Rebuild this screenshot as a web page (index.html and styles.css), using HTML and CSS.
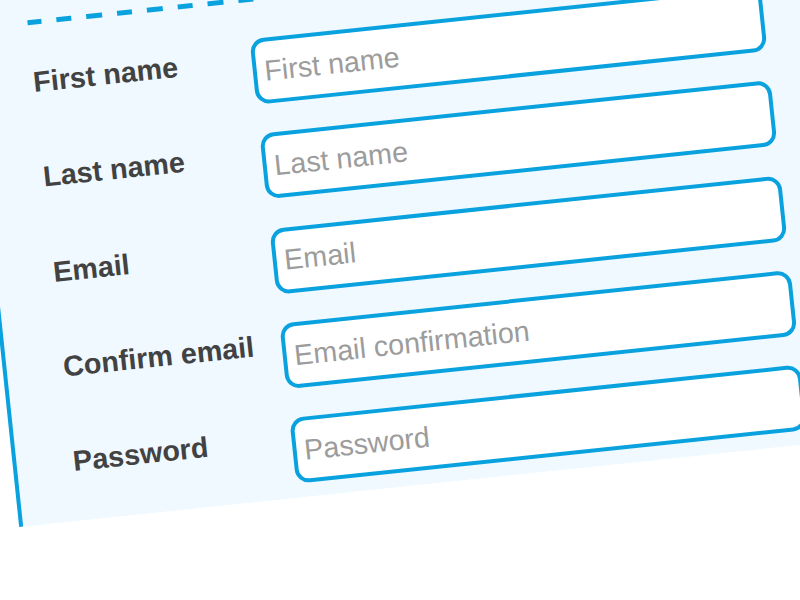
FILE: index.html
```html
<!DOCTYPE html>
<html lang="en">
<head>
<meta charset="utf-8">
<title>Sign up form</title>
<link rel="stylesheet" href="styles.css">
</head>
<body>
<div class="stage">
  <section class="panel">
    <div class="divider"></div>
    <form class="form">
      <label class="label" for="first">First name</label>
      <input class="field" id="first" type="text" placeholder="First name">
      <label class="label" for="last">Last name</label>
      <input class="field" id="last" type="text" placeholder="Last name">
      <label class="label" for="email">Email</label>
      <input class="field" id="email" type="email" placeholder="Email">
      <label class="label" for="confirm">Confirm email</label>
      <input class="field" id="confirm" type="email" placeholder="Email confirmation">
      <label class="label" for="password">Password</label>
      <input class="field" id="password" type="password" placeholder="Password">
    </form>
  </section>
</div>
</body>
</html>
```
FILE: styles.css
```css
html, body {
  margin: 0;
  padding: 0;
  overflow: hidden;
  background: #ffffff;
  width: 800px;
  height: 600px;
}

.stage {
  width: 800px;
  height: 600px;
  overflow: hidden;
}

.panel {
  box-sizing: border-box;
  width: 920px;
  margin: -20px 0 0 -36.5px;
  padding: 43px 0 13.6px 56.5px;
  background: #eff9ff;
  border-left: 4px solid #0aa2de;
  transform-origin: 36.5px 20px;
  transform: rotate(-6deg);
  font-family: "Liberation Sans", Arial, sans-serif;
}

.divider {
  width: 740px;
  height: 5px;
  background: repeating-linear-gradient(90deg, #0aa2de 0 15.5px, transparent 15.5px 30.5px);
  background-position: -2px 0;
}

.form {
  display: grid;
  grid-template-columns: 219px 514px;
  row-gap: 29.3px;
  align-items: start;
  margin-top: 37.2px;
}

.label {
  font-size: 28.75px;
  font-weight: bold;
  line-height: 34px;
  padding-top: 3px;
  color: #424242;
}

.field {
  box-sizing: border-box;
  width: 514px;
  height: 66px;
  margin: 0;
  padding: 0 8px;
  border: 4px solid #0aa2de;
  border-radius: 14px;
  background: #ffffff;
  font-family: "Liberation Sans", Arial, sans-serif;
  font-size: 28.75px;
  color: #424242;
  outline: none;
}

.field::placeholder {
  color: #9c9c9c;
  opacity: 1;
}
```
